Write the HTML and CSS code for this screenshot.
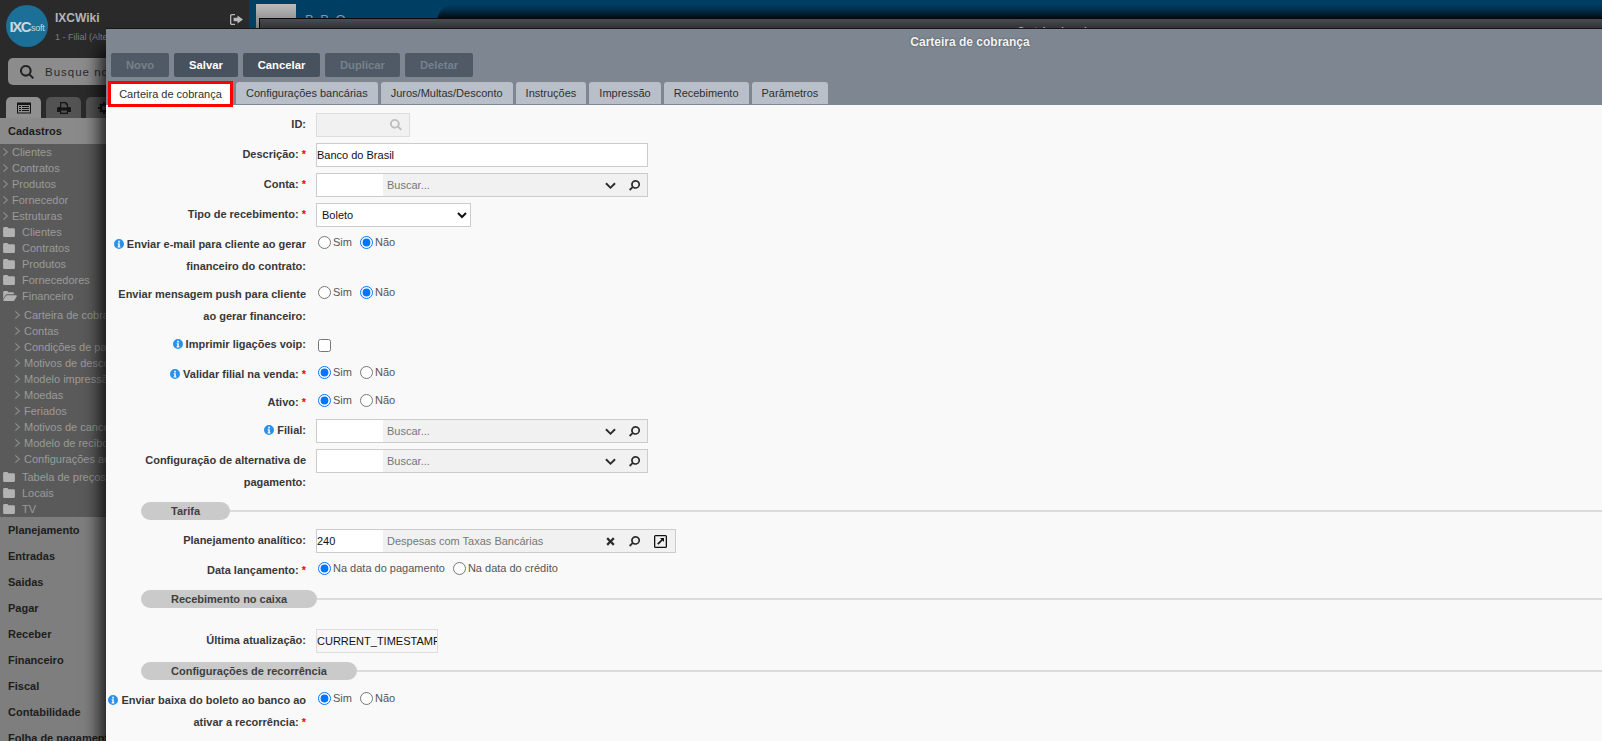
FILE: index.html
```html
<!DOCTYPE html>
<html lang="pt-BR">
<head>
<meta charset="utf-8">
<title>Carteira de cobrança</title>
<link rel="stylesheet" href="styles.css">
</head>
<body>
<svg class="defs" width="0" height="0">
  <defs>
    <symbol id="i-info" viewBox="0 0 16 16"><path fill-rule="evenodd" d="M8 0a8 8 0 1 1 0 16A8 8 0 0 1 8 0zM6.6 2.8v2.6h2.8V2.8zM5.8 6.8v1.7h1v3.2h-1v1.7h4.4v-1.7h-.9V6.8z"/></symbol>
    <symbol id="i-chev" viewBox="0 0 12 8"><path d="M1.6.6 6 5 10.4.6 12 2.2 6 8 0 2.2z"/></symbol>
    <symbol id="i-search" viewBox="0 0 12 12"><path fill-rule="evenodd" d="M7.2 0a4.8 4.8 0 1 1-2.9 8.6L1.4 11.6 0 10.2l3-2.9A4.8 4.8 0 0 1 7.2 0zm0 1.8a3 3 0 1 0 0 6 3 3 0 0 0 0-6z"/></symbol>
    <symbol id="i-times" viewBox="0 0 10 10"><path d="M2.2.4 5 3.2 7.8.4l1.8 1.8L6.8 5l2.8 2.8-1.8 1.8L5 6.8 2.2 9.6.4 7.8 3.2 5 .4 2.2z"/></symbol>
    <symbol id="i-open" viewBox="0 0 13 13"><path fill-rule="evenodd" d="M1.5 0h10A1.5 1.5 0 0 1 13 1.5v10a1.5 1.5 0 0 1-1.5 1.5h-10A1.5 1.5 0 0 1 0 11.5v-10A1.500 1.500 0 0 1 1.500 0zM1.300 1.300v10.400h10.400V1.300zM6 3h4v4L8.600 5.600 4.400 9.800 3.200 8.600l4.200-4.200z"/></symbol>
    <symbol id="i-folder" viewBox="0 0 13 11"><path d="M1.500 0h3.300l1.200 1.500h5.500A1.500 1.500 0 0 1 13 3v6.500A1.500 1.500 0 0 1 11.500 11h-10A1.500 1.500 0 0 1 0 9.500v-8A1.500 1.500 0 0 1 1.500 0z"/></symbol>
    <symbol id="i-folder-open" viewBox="0 0 15 11"><path d="M1.400 0h3.200l1.200 1.400h4.700c.8 0 1.300.5 1.300 1.300v1H4.300c-.8 0-1.400.4-1.800 1L0 8.800V1.400C0 .6.600 0 1.400 0zM4.200 4.800H14c.8 0 1.200.7.800 1.300l-2.400 4c-.3.600-.8.900-1.500.9H.9C.2 11-.2 10.300.2 9.700l2.500-4c.3-.6.800-.9 1.500-.9z"/></symbol>
    <symbol id="i-right" viewBox="0 0 5 8"><path d="M.7 0 5 4 .7 8 0 7.200 3.400 4 0 .8z"/></symbol>
  </defs>
</svg>

<div class="app">
  <aside class="sidebar">
    <header class="brand">
      <div class="logo"><span class="logo-ixc">IXC</span><span class="logo-soft">soft</span></div>
      <div class="brand-text">
        <div class="brand-name">IXCWiki</div>
        <div class="brand-sub">1 - Filial (Alterar)</div>
      </div>
      <svg class="logout" viewBox="0 0 13 11"><path fill-rule="evenodd" d="M1.800 0H5v1.300H2c-.4 0-.7.3-.7.700v7c0 .4.300.7.700.7h3V11H1.800C.8 11 0 10.200 0 9.200V1.800C0 .8.800 0 1.800 0z"/><path d="M7.500 1.500 13 5.500 7.500 9.500V7.200H3.600V3.800h3.900z"/></svg>
    </header>
    <div class="search">
      <svg class="search-icon" viewBox="0 0 14 14"><path fill-rule="evenodd" d="M5.800 0a5.800 5.800 0 0 1 4.700 9.200l3.500 3.400-1.400 1.400-3.400-3.500A5.800 5.800 0 1 1 5.800 0zm0 2a3.800 3.800 0 1 0 0 7.600 3.800 3.800 0 0 0 0-7.600z"/></svg>
      <span>Busque no</span>
    </div>
    <nav class="side-tabs">
      <div class="side-tab side-tab-on">
        <svg viewBox="0 0 14 11"><path fill-rule="evenodd" d="M0 0h14v11H0zM1 2.500V10h12V2.500zM2 3.500h2v1H2zM5 3.500h7v1H5zM2 5.500h2v1H2zM5 5.500h7v1H5zM2 7.500h2v1H2zM5 7.500h7v1H5z"/></svg>
      </div>
      <div class="side-tab">
        <svg viewBox="0 0 14 12"><path fill-rule="evenodd" d="M3 0h6l2 2v3h1.500c.8 0 1.500.7 1.500 1.500V10h-3v2H3v-2H0V6.500C0 5.700.7 5 1.500 5H3zM4.200 1.200V5.500h5.600V2.800H8.400V1.200zM4.200 8.500v2.300h5.600V8.500z"/></svg>
      </div>
      <div class="side-tab">
        <svg viewBox="0 0 12 12"><circle cx="6" cy="6" r="3.200" fill="none" stroke="currentColor" stroke-width="2"/><path d="M5 0h2v2H5zM5 10h2v2H5zM0 5h2v2H0zM10 5h2v2h-2zM1.300 2.700l1.400-1.400 1.400 1.400-1.400 1.400zM7.900 9.300l1.400-1.400 1.400 1.400-1.400 1.400zM1.300 9.300l1.400-1.400 1.400 1.400-1.400 1.400zM7.900 2.700l1.400-1.400 1.400 1.400-1.400 1.400z"/></svg>
      </div>
    </nav>
    <div class="menu-head">Cadastros</div>
    <ul class="tree">
      <li class="leaf"><svg class="chev"><use href="#i-right"/></svg>Clientes</li>
      <li class="leaf"><svg class="chev"><use href="#i-right"/></svg>Contratos</li>
      <li class="leaf"><svg class="chev"><use href="#i-right"/></svg>Produtos</li>
      <li class="leaf"><svg class="chev"><use href="#i-right"/></svg>Fornecedor</li>
      <li class="leaf"><svg class="chev"><use href="#i-right"/></svg>Estruturas</li>
      <li class="dir"><svg class="fold"><use href="#i-folder"/></svg>Clientes</li>
      <li class="dir"><svg class="fold"><use href="#i-folder"/></svg>Contratos</li>
      <li class="dir"><svg class="fold"><use href="#i-folder"/></svg>Produtos</li>
      <li class="dir"><svg class="fold"><use href="#i-folder"/></svg>Fornecedores</li>
      <li class="dir dir-open"><svg class="fold"><use href="#i-folder-open"/></svg>Financeiro</li>
      <li class="sub"><svg class="chev"><use href="#i-right"/></svg>Carteira de cobrança</li>
      <li class="sub"><svg class="chev"><use href="#i-right"/></svg>Contas</li>
      <li class="sub"><svg class="chev"><use href="#i-right"/></svg>Condições de pagamento</li>
      <li class="sub"><svg class="chev"><use href="#i-right"/></svg>Motivos de desconto</li>
      <li class="sub"><svg class="chev"><use href="#i-right"/></svg>Modelo impressão</li>
      <li class="sub"><svg class="chev"><use href="#i-right"/></svg>Moedas</li>
      <li class="sub"><svg class="chev"><use href="#i-right"/></svg>Feriados</li>
      <li class="sub"><svg class="chev"><use href="#i-right"/></svg>Motivos de cancelamento</li>
      <li class="sub"><svg class="chev"><use href="#i-right"/></svg>Modelo de recibo</li>
      <li class="sub sub-last"><svg class="chev"><use href="#i-right"/></svg>Configurações adicionais</li>
      <li class="dir"><svg class="fold"><use href="#i-folder"/></svg>Tabela de preços</li>
      <li class="dir"><svg class="fold"><use href="#i-folder"/></svg>Locais</li>
      <li class="dir"><svg class="fold"><use href="#i-folder"/></svg>TV</li>
    </ul>
    <ul class="groups">
      <li>Planejamento</li>
      <li>Entradas</li>
      <li>Saidas</li>
      <li>Pagar</li>
      <li>Receber</li>
      <li>Financeiro</li>
      <li>Fiscal</li>
      <li>Contabilidade</li>
      <li>Folha de pagamento</li>
    </ul>
  </aside>
  <div class="topbar">
    <div class="thumb"></div>
    <div class="thumb-text">B B O —</div>
    <div class="topbar-shape"></div>
  </div>
</div>

<div class="window-back">
  <div class="window-back-title">Carteira de cobrança</div>
</div>

<main class="window">
  <div class="win-title">Carteira de cobrança</div>
  <div class="toolbar">
    <button class="btn btn-off btn-novo" type="button">Novo</button>
    <button class="btn btn-salvar" type="button">Salvar</button>
    <button class="btn btn-cancelar" type="button">Cancelar</button>
    <button class="btn btn-off btn-duplicar" type="button">Duplicar</button>
    <button class="btn btn-off btn-deletar" type="button">Deletar</button>
  </div>
  <div class="tabs">
    <div class="tab tab-on">Carteira de cobrança</div>
    <div class="tab">Configurações bancárias</div>
    <div class="tab">Juros/Multas/Desconto</div>
    <div class="tab">Instruções</div>
    <div class="tab">Impressão</div>
    <div class="tab">Recebimento</div>
    <div class="tab">Parâmetros</div>
  </div>

  <form class="form">
    <div class="row">
      <label class="lbl">ID:</label>
      <div class="idbox"><svg class="ic ic-gray"><use href="#i-search"/></svg></div>
    </div>
    <div class="row">
      <label class="lbl">Descrição: <b class="req">*</b></label>
      <input class="text text-wide" type="text" value="Banco do Brasil">
    </div>
    <div class="row">
      <label class="lbl">Conta: <b class="req">*</b></label>
      <div class="lookup">
        <input class="lookup-id" type="text">
        <div class="lookup-desc">Buscar...</div>
        <svg class="ic ic-chev"><use href="#i-chev"/></svg>
        <svg class="ic ic-find"><use href="#i-search"/></svg>
      </div>
    </div>
    <div class="row">
      <label class="lbl">Tipo de recebimento: <b class="req">*</b></label>
      <select class="sel"><option>Boleto</option></select>
    </div>
    <div class="row row-radio">
      <label class="lbl"><svg class="info"><use href="#i-info"/></svg> Enviar e-mail para cliente ao gerar<br>financeiro do contrato:</label>
      <div class="radios">
        <label class="radio"><input type="radio" name="r1">Sim</label>
        <label class="radio"><input type="radio" name="r1" checked>Não</label>
      </div>
    </div>
    <div class="row row-radio">
      <label class="lbl">Enviar mensagem push para cliente<br>ao gerar financeiro:</label>
      <div class="radios">
        <label class="radio"><input type="radio" name="r2">Sim</label>
        <label class="radio"><input type="radio" name="r2" checked>Não</label>
      </div>
    </div>
    <div class="row row-check">
      <label class="lbl"><svg class="info"><use href="#i-info"/></svg> Imprimir ligações voip:</label>
      <input class="check" type="checkbox">
    </div>
    <div class="row row-radio">
      <label class="lbl"><svg class="info"><use href="#i-info"/></svg> Validar filial na venda: <b class="req">*</b></label>
      <div class="radios">
        <label class="radio"><input type="radio" name="r3" checked>Sim</label>
        <label class="radio"><input type="radio" name="r3">Não</label>
      </div>
    </div>
    <div class="row row-radio">
      <label class="lbl">Ativo: <b class="req">*</b></label>
      <div class="radios">
        <label class="radio"><input type="radio" name="r4" checked>Sim</label>
        <label class="radio"><input type="radio" name="r4">Não</label>
      </div>
    </div>
    <div class="row">
      <label class="lbl"><svg class="info"><use href="#i-info"/></svg> Filial:</label>
      <div class="lookup">
        <input class="lookup-id" type="text">
        <div class="lookup-desc">Buscar...</div>
        <svg class="ic ic-chev"><use href="#i-chev"/></svg>
        <svg class="ic ic-find"><use href="#i-search"/></svg>
      </div>
    </div>
    <div class="row row-tail">
      <label class="lbl">Configuração de alternativa de<br>pagamento:</label>
      <div class="lookup">
        <input class="lookup-id" type="text">
        <div class="lookup-desc">Buscar...</div>
        <svg class="ic ic-chev"><use href="#i-chev"/></svg>
        <svg class="ic ic-find"><use href="#i-search"/></svg>
      </div>
    </div>

    <div class="section"><span class="pill">Tarifa</span><span class="rule"></span></div>
    <div class="row">
      <label class="lbl">Planejamento analítico:</label>
      <div class="lookup lookup-long">
        <input class="lookup-id" type="text" value="240">
        <div class="lookup-desc">Despesas com Taxas Bancárias</div>
        <svg class="ic ic-x"><use href="#i-times"/></svg>
        <svg class="ic ic-find"><use href="#i-search"/></svg>
        <svg class="ic ic-open"><use href="#i-open"/></svg>
      </div>
    </div>
    <div class="row row-radio row-tail-sm">
      <label class="lbl">Data lançamento: <b class="req">*</b></label>
      <div class="radios">
        <label class="radio"><input type="radio" name="r5" checked>Na data do pagamento</label>
        <label class="radio"><input type="radio" name="r5">Na data do crédito</label>
      </div>
    </div>
    <div class="section section-gap"><span class="pill">Recebimento no caixa</span><span class="rule"></span></div>
    <div class="row row-tail-sm">
      <label class="lbl">Última atualização:</label>
      <input class="text text-ts" type="text" value="CURRENT_TIMESTAMP" readonly>
    </div>
    <div class="section"><span class="pill">Configurações de recorrência</span><span class="rule"></span></div>
    <div class="row row-radio">
      <label class="lbl"><svg class="info"><use href="#i-info"/></svg> Enviar baixa do boleto ao banco ao<br>ativar a recorrência: <b class="req">*</b></label>
      <div class="radios">
        <label class="radio"><input type="radio" name="r6" checked>Sim</label>
        <label class="radio"><input type="radio" name="r6">Não</label>
      </div>
    </div>
  </form>
</main>
</body>
</html>
```
FILE: styles.css
```css
* { box-sizing: border-box; }
html, body { margin: 0; padding: 0; height: 741px; overflow: hidden; }
body { position: relative; font-family: "Liberation Sans", Arial, sans-serif; font-size: 12px; background: #2b2b2b; }
ul { list-style: none; margin: 0; padding: 0; }
.defs { position: absolute; }

.app { display: flex; height: 741px; overflow: hidden; }
.sidebar { width: 249px; flex: none; display: flex; flex-direction: column; background: #2a2a2a; overflow: hidden; }
.brand { display: flex; height: 58px; flex: none; position: relative; padding: 5px 0 0 6px; }
.logo { width: 42px; height: 42px; border-radius: 50%; background: #1c6f97; display: flex; align-items: center; justify-content: center; color: #ccd7dd; flex: none; padding-top: 1px; }
.logo-ixc { font-weight: 700; font-size: 15px; letter-spacing: -1.5px; }
.logo-soft { font-size: 9px; margin-left: 1px; padding-top: 2px; letter-spacing: -.3px; }
.brand-text { margin-left: 7px; white-space: nowrap; }
.brand-name { font-size: 12px; font-weight: 700; color: #b5b5b5; margin-top: 6px; line-height: 14px; }
.brand-sub { font-size: 9px; color: #7c7c7c; margin-top: 6px; line-height: 12px; }
.logout { position: absolute; left: 230px; top: 14px; width: 13px; height: 11px; fill: #b9b9b9; }
.search { margin-left: 8px; width: 240px; height: 27px; flex: none; border-radius: 5px; background: #8c8c8c; display: flex; align-items: center; padding-left: 12px; color: #2a2a2a; letter-spacing: 1px; font-size: 11.500px; white-space: nowrap; }
.search-icon { width: 14px; height: 14px; fill: #222; margin-right: 11px; }
.side-tabs { display: flex; flex: none; margin-top: 12px; padding-left: 6px; height: 21px; gap: 5px; background: #2a2a2a; }
.side-tab { width: 35px; height: 21px; border-radius: 5px 5px 0 0; background: #535353; display: flex; justify-content: center; align-items: center; color: #141414; }
.side-tab svg { width: 14px; height: 12px; fill: #141414; }
.side-tab-on { background: #909090; }
.menu-head { height: 26px; flex: none; background: #8a8a8a; font-weight: 700; font-size: 11px; line-height: 26px; padding-left: 8px; color: #1c1c1c; }
.tree { flex: none; height: 373px; background: #5a5a5a; padding-top: 0; color: #9a9a9a; font-size: 11px; }
.tree li { height: 16px; line-height: 16px; white-space: nowrap; display: flex; align-items: center; }
.leaf { padding-left: 3px; }
.dir { padding-left: 3px; }
.sub { padding-left: 15px; }
.dir-open { margin-bottom: 3px; }
.sub-last { margin-bottom: 2px; }
.chev { width: 5px; height: 8px; fill: #929292; margin-right: 4px; flex: none; }
.fold { width: 12px; height: 10px; fill: #b2b2b2; margin-right: 7px; flex: none; }
.dir-open .fold { width: 14px; margin-right: 5px; }
.groups { flex: 1; background: #7e7e7e; border-top: 0; padding-top: 0; }
.groups li { height: 26px; line-height: 26px; font-weight: 700; font-size: 11px; color: #1d1d1d; padding-left: 8px; white-space: nowrap; }

.topbar { flex: 1; height: 28px; background: #013e63; position: relative; overflow: hidden; }
.thumb { position: absolute; left: 7px; top: 4px; width: 40px; height: 24px; background: linear-gradient(#bcbcbc, #7e7e7e); }
.thumb-text { position: absolute; left: 56px; top: 12px; font-size: 13px; color: #7f98a8; letter-spacing: 1.500px; white-space: nowrap; }
.topbar-shape { position: absolute; left: 188px; top: 4px; width: 1300px; height: 30px; border-radius: 18px 0 0 0; background: linear-gradient(#013c5f 0, #012f4a 6px, #011e2f 10px, #000a10 14px); }

.window-back { position: absolute; left: 259px; top: 18px; width: 1616px; height: 200px; background: linear-gradient(#4a4c50, #303236 10px); border: 1px solid #0a0a0a; }
.window-back-title { text-align: center; font-size: 10px; font-weight: 700; color: #a9abae; padding-top: 7px; }

.window { position: absolute; left: 106px; top: 28px; width: 1728px; height: 760px; background: #f9f9f9; box-shadow: -4px 20px 16px 2px rgba(0,0,0,.8); border-top: 1px solid #15171a; }
.win-title { height: 24px; background: #7e8791; color: #f3f4f5; text-align: center; font-weight: 700; font-size: 12px; line-height: 26px; text-shadow: 0 0 2px rgba(0,0,0,.5); }
.toolbar { display: flex; gap: 5px; padding: 0 0 5px 5px; height: 29px; background: #7e8791; }
.btn { height: 24px; border: 0; border-radius: 2px; background: #47525e; color: #fff; font: 700 11.250px "Liberation Sans", Arial, sans-serif; padding: 0; }
.btn-off { background: #4f5a66; color: #76818c; }
.btn-novo { width: 58px; }
.btn-salvar { width: 64px; }
.btn-cancelar { width: 77px; }
.btn-duplicar { width: 75px; }
.btn-deletar { width: 68px; }
.tabs { display: flex; gap: 3px; height: 23px; padding-left: 2px; background: #7e8791; align-items: flex-start; }
.tab { height: 22px; line-height: 23px; padding: 0 10px; background: #b8bfc8; border-radius: 3px 3px 0 0; font-size: 11px; color: #2f2f2f; white-space: nowrap; }
.tab-on { height: 26px; margin-top: -1px; width: 125px; padding: 0; text-align: center; line-height: 21px; background: #fff; border: 3px solid #f00; border-radius: 0; position: relative; z-index: 1; }

.form { display: block; padding-top: 8px; }
.row { display: flex; align-items: flex-start; margin-bottom: 6px; }
.lbl { width: 200px; margin-right: 10px; flex: none; text-align: right; font-weight: 700; font-size: 11px; line-height: 22px; color: #383838; white-space: nowrap; }
.req { color: #f00; font-weight: 700; }
.info { width: 10px; height: 10px; fill: #2a90ea; vertical-align: -1px; }
.row-check { height: 24px; margin-bottom: 6px; }
.row-tail { margin-bottom: 9px; }
.row-tail-sm { margin-bottom: 9px; }
.text { height: 24px; border: 1px solid #ccc; background: #fff; font: 11px "Liberation Sans", Arial, sans-serif; color: #111; padding: 0; outline: 0; }
.text-wide { width: 332px; }
.text-ts { width: 122px; background: #f7f7f7; border-color: #ddd; }
.idbox { width: 94px; height: 24px; border: 1px solid #ddd; background: #f1f1f1; display: flex; justify-content: flex-end; align-items: center; padding-right: 7px; }
.ic { display: block; flex: none; }
.ic-gray { width: 12px; height: 12px; fill: #bdbdbd; transform: scaleX(-1); }
.lookup { width: 332px; height: 24px; border: 1px solid #ccc; display: flex; align-items: center; background: #f1f1f1; }
.lookup-long { width: 360px; }
.lookup-id { width: 66px; height: 22px; border: 0; background: #fff; padding: 0; font: 11px "Liberation Sans", Arial, sans-serif; color: #111; outline: 0; }
.lookup-desc { flex: 1; padding-left: 4px; color: #777; font-size: 11px; white-space: nowrap; }
.ic-chev { width: 11px; height: 7px; fill: #2b2b2b; margin-right: 13px; }
.ic-find { width: 11px; height: 11px; fill: #2b2b2b; margin-right: 7px; }
.ic-x { width: 9px; height: 9px; fill: #2b2b2b; margin-right: 14px; }
.lookup-long .ic-find { margin-right: 14px; }
.ic-open { width: 13px; height: 13px; fill: #111; margin-right: 8px; }
.sel { width: 155px; height: 24px; border: 1px solid #ccc; background: #fff; font: 11px "Liberation Sans", Arial, sans-serif; color: #111; padding-left: 1px; outline: 0; }
.radios { display: flex; gap: 8px; padding: 3px 0 0 2px; }
.radio { display: flex; align-items: center; font-size: 11px; color: #555; line-height: 13px; white-space: nowrap; }
.radio input { width: 13px; height: 13px; margin: 0 2px 0 0; flex: none; }
.check { width: 13px; height: 13px; margin: 6px 0 0 2px; }
.section { display: flex; align-items: center; margin: 0 0 9px 35px; height: 18px; }
.section-gap { margin-bottom: 21px; }
.pill { height: 18px; line-height: 18px; padding: 0 30px; border-radius: 9px; background: #cacaca; font-weight: 700; font-size: 11px; color: #3f3f3f; white-space: nowrap; }
.rule { flex: 1; height: 2px; background: #dcdcdc; }
```
